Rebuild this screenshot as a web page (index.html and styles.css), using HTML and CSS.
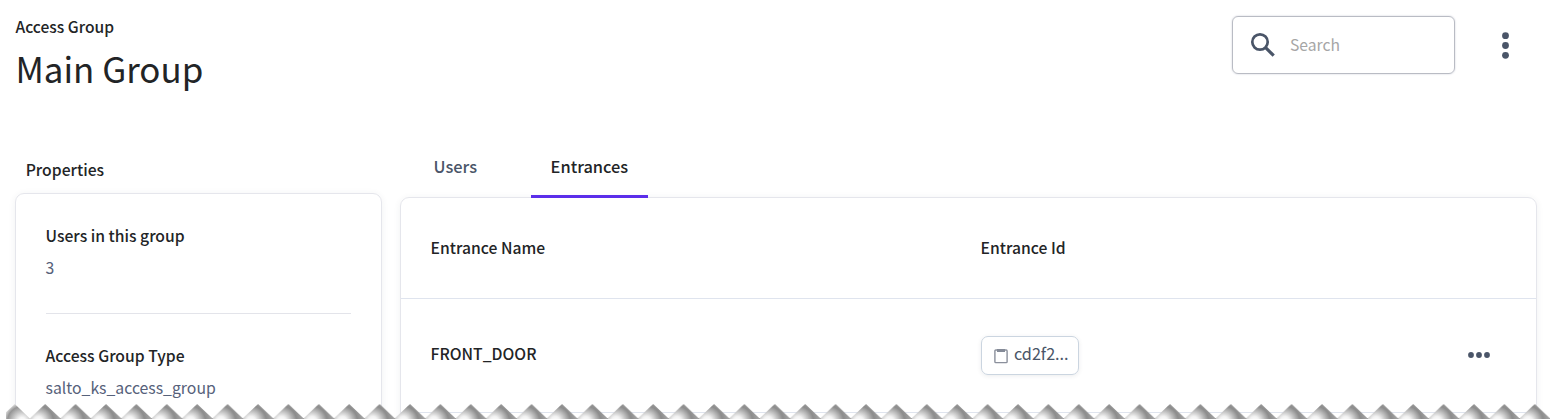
FILE: index.html
```html
<!DOCTYPE html>
<html lang="en">
<head>
<meta charset="utf-8">
<title>Main Group</title>
<link rel="stylesheet" href="styles.css">
</head>
<body>
<div class="page">
  <header class="header">
    <div class="heading">
      <div class="eyebrow">Access Group</div>
      <h1 class="title">Main Group</h1>
    </div>
    <div class="tools">
      <label class="search">
        <svg class="search-icon" width="26" height="26" viewBox="0 0 26 26" fill="none" stroke="#4a5568" stroke-width="2.7"><circle cx="10" cy="10" r="7.7"/><path d="M15.6 15.6L23.7 23.7" stroke-width="3.2"/></svg>
        <span class="placeholder">Search</span>
      </label>
      <svg class="kebab" width="8" height="28" viewBox="0 0 8 28" fill="#4a5568"><circle cx="3.5" cy="3.7" r="3.4"/><circle cx="3.5" cy="13.5" r="3.4"/><circle cx="3.5" cy="23.3" r="3.4"/></svg>
    </div>
  </header>
  <div class="columns">
    <aside class="side">
      <h2 class="side-title">Properties</h2>
      <section class="card props">
        <div class="prop">
          <div class="label">Users in this group</div>
          <div class="value">3</div>
        </div>
        <div class="prop">
          <div class="label">Access Group Type</div>
          <div class="value">salto_ks_access_group</div>
        </div>
      </section>
    </aside>
    <main class="main">
      <nav class="tabs">
        <a class="tab">Users</a>
        <a class="tab active">Entrances</a>
      </nav>
      <section class="card table">
        <div class="row head">
          <div>Entrance Name</div>
          <div>Entrance Id</div>
        </div>
        <div class="row">
          <div class="door">FRONT_DOOR</div>
          <div class="chip">
            <svg width="14" height="16" viewBox="0 0 14 16"><rect x="0.9" y="2" width="12.2" height="12.6" rx="0.9" fill="none" stroke="#8b909c" stroke-width="1.4"/><path d="M3 1h8v3H3z" fill="#858b98"/></svg>
            <span class="chip-text">cd2f2...</span>
          </div>
          <svg class="more" width="24" height="8" viewBox="0 0 24 8" fill="#4a5568"><circle cx="4" cy="4" r="2.9"/><circle cx="12" cy="4" r="2.9"/><circle cx="20" cy="4" r="2.9"/></svg>
        </div>
      </section>
    </main>
  </div>
  <svg class="torn" width="1550" height="16" viewBox="0 0 1550 16">
    <defs>
      <radialGradient id="fold" gradientUnits="userSpaceOnUse" cx="8" cy="18" r="23">
        <stop offset="0" stop-color="#fff"/><stop offset=".2" stop-color="#f2f2f2"/><stop offset=".65" stop-color="#8c8c8c"/><stop offset="1" stop-color="#aaa"/>
      </radialGradient>
      <radialGradient id="foldStart" gradientUnits="userSpaceOnUse" cx="22" cy="18" r="18">
        <stop offset="0" stop-color="#fff"/><stop offset=".2" stop-color="#f6f6f6"/><stop offset=".8" stop-color="#959595"/><stop offset="1" stop-color="#d8d8d8"/>
      </radialGradient>
      <pattern id="teeth" width="30.4" height="16" patternUnits="userSpaceOnUse">
        <path d="M0 16V15L14.8 1L29.6 15L30.4 15V16z" fill="url(#fold)"/>
      </pattern>
    </defs>
    <path d="M6 16V9.3L14.8 1L30.4 16z" fill="url(#foldStart)"/>
    <rect x="30.4" width="1519.6" height="16" fill="url(#teeth)"/>
  </svg>
</div>
</body>
</html>
```
FILE: styles.css
```css
* { box-sizing: border-box; }
body { margin: 0; background: #fff; color: #222426; font: 500 15.7px/24px "Noto Sans CJK SC", "Noto Sans", sans-serif; }
.page { position: relative; width: 1550px; height: 419px; overflow: hidden; padding: 15px 13px 0 15px; }
.header { display: flex; justify-content: space-between; height: 138px; }
.heading { margin-top: -1px; padding-left: 0.5px; }
.eyebrow { line-height: 24px; font-size: 15.6px; }
.title { margin: 5px 0 0; font-size: 34.9px; line-height: 50px; font-weight: 400; }
.tools { display: flex; align-items: flex-start; padding-right: 27px; gap: 47px; }
.search { display: flex; align-items: center; width: 223px; height: 58px; margin-top: 1px; padding: 0 0 0 17px; border: 1px solid #b9bcc4; border-radius: 6px; box-shadow: 0 0 2px #c9cbd6; }
.placeholder { margin-left: 14px; color: #a6a6a6; font-weight: 400; }
.kebab { margin-top: 17px; }
.columns { display: flex; gap: 18px; }
.side { width: 367px; }
.main { flex: 1; }
.side-title { margin: 5px 0 11px 10.7px; font-size: 15.7px; line-height: 24px; font-weight: 500; }
.card { border: 1px solid #e5e6ec; border-radius: 9px; box-shadow: 0 1px 7px rgba(60, 64, 80, .07); }
.props { height: 260px; padding: 0 30px 0 29.5px; }
.prop { height: 120px; padding-top: 30px; border-bottom: 1px solid #e3e4ea; }
.label { line-height: 24px; }
.value { margin-top: 8px; color: #56617a; font-size: 15.8px; font-weight: 400; line-height: 24px; }
.tabs { display: flex; height: 44px; padding-left: 13px; }
.tab { height: 45px; padding: 0 20px; color: #4a5568; font-size: 16.4px; line-height: 26px; }
.tab.active { width: 117px; margin-left: 33px; padding-left: 19.6px; color: #222426; border-bottom: 3px solid #5b2eea; z-index: 1; }
.tab:first-child { width: 85px; padding: 0 0 0 20.5px; }
.table { height: 260px; }
.row { display: grid; grid-template-columns: 550px 1fr auto; align-items: center; height: 114px; padding: 0 45px 0 29.6px; border-bottom: 1px solid #dfe4ee; }
.row.head { height: 101px; }
.door { padding-bottom: 4px; }
.chip { display: flex; align-items: center; gap: 6px; width: 98px; height: 39px; margin-left: 0.4px; padding-left: 12px; color: #4a5568; border: 1px solid #cbd5e0; border-radius: 7px; box-shadow: 0 1px 4px rgba(60, 64, 80, .1); }
.chip-text { margin-top: -5px; font-weight: 400; font-size: 16.2px; }
.more { margin-top: -2px; }
.torn { position: absolute; left: 0; top: 403px; }
```
